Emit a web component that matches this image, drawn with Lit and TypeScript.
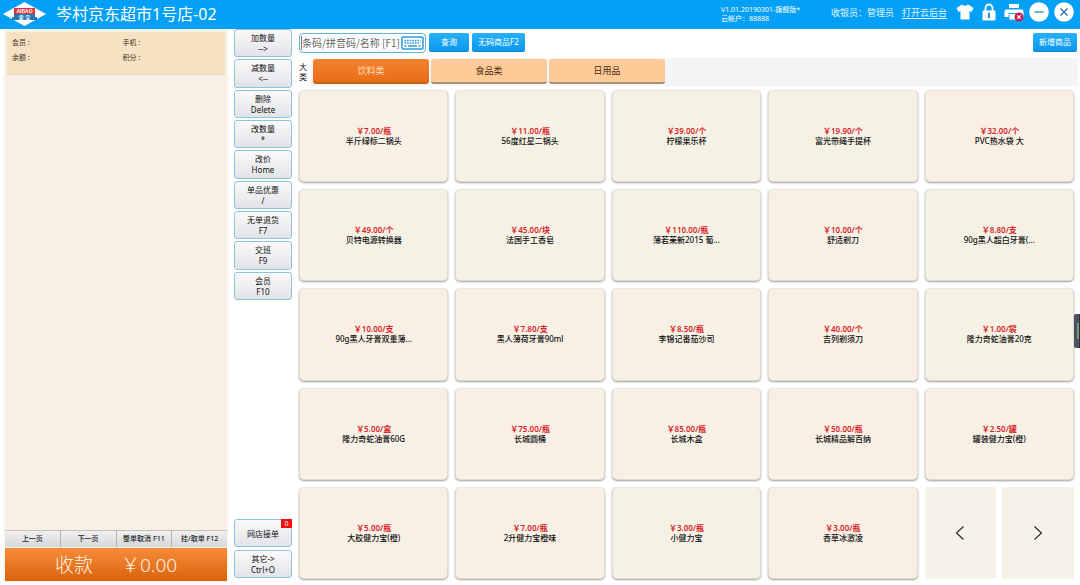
import { LitElement, html, css, svg } from "lit";
import { customElement, property, state } from "lit/decorators.js";
import { classMap } from "lit/directives/class-map.js";

interface Product {
  price: string;
  name: string;
  tone: "warm" | "cool" | "mixed";
}

const p = (price: string, name: string, tone: Product["tone"]): Product => ({ price, name, tone });

const PRODUCTS: Product[] = [
  p("￥7.00/瓶", "半斤绿标二锅头", "mixed"),
  p("￥11.00/瓶", "56度红星二锅头", "cool"),
  p("￥39.00/个", "柠檬果乐杯", "cool"),
  p("￥19.90/个", "富光带绳手提杯", "cool"),
  p("￥32.00/个", "PVC热水袋 大", "warm"),
  p("￥49.00/个", "贝特电源转换器", "cool"),
  p("￥45.00/块", "法国手工香皂", "cool"),
  p("￥110.00/瓶", "薄若莱新2015 葡...", "cool"),
  p("￥10.00/个", "舒适剃刀", "mixed"),
  p("￥8.80/支", "90g黑人超白牙膏(...", "cool"),
  p("￥10.00/支", "90g黑人牙膏双重薄...", "warm"),
  p("￥7.80/支", "黑人薄荷牙膏90ml", "mixed"),
  p("￥8.50/瓶", "李锦记番茄沙司", "mixed"),
  p("￥40.00/个", "吉列剃须刀", "warm"),
  p("￥1.00/袋", "隆力奇蛇油膏20克", "cool"),
  p("￥5.00/盒", "隆力奇蛇油膏60G", "mixed"),
  p("￥75.00/瓶", "长城圆桶", "warm"),
  p("￥85.00/瓶", "长城木盒", "mixed"),
  p("￥50.00/瓶", "长城精品解百纳", "warm"),
  p("￥2.50/罐", "罐装健力宝(橙)", "mixed"),
  p("￥5.00/瓶", "大胶健力宝(橙)", "mixed"),
  p("￥7.00/瓶", "2升健力宝橙味", "mixed"),
  p("￥3.00/瓶", "小健力宝", "cool"),
  p("￥3.00/瓶", "香草冰激凌", "warm"),
];

const ACTIONS: [string, string][] = [
  ["加数量", "-->"],
  ["减数量", "<--"],
  ["删除", "Delete"],
  ["改数量", "*"],
  ["改价", "Home"],
  ["单品优惠", "/"],
  ["无单退货", "F7"],
  ["交班", "F9"],
  ["会员", "F10"],
];

const CATEGORIES = ["饮料类", "食品类", "日用品"];

const base = css`
  * {
    box-sizing: border-box;
  }
  button,
  input {
    margin: 0;
    padding: 0;
    border: 0;
    background: none;
    font: inherit;
    color: inherit;
  }
  button {
    cursor: pointer;
  }
  svg {
    display: block;
  }
`;

@customElement("pos-header")
export class PosHeader extends LitElement {
  static styles = [
    base,
    css`
      :host {
        display: flex;
        align-items: center;
        height: 29px;
        padding: 0 6px 5px 3px;
        background: #04a0f5;
        color: #fff;
      }
      .logo {
        flex: none;
        margin-top: 4px;
      }
      .logo-text {
        font: bold 5px "Liberation Sans", "Noto Sans CJK SC", sans-serif;
      }
      h1 {
        flex: 1;
        margin: 4px 0 0 10px;
        font-size: 16px;
        line-height: 20px;
        font-weight: 400;
        white-space: nowrap;
      }
      .version {
        width: 110px;
        margin-top: 4px;
        font-size: 7px;
        line-height: 9px;
        white-space: nowrap;
      }
      .cashier,
      .cloud {
        margin-top: 2px;
        font-size: 9px;
        line-height: 14px;
        color: #e2f4ff;
        white-space: nowrap;
      }
      .cloud {
        margin-left: 8px;
        margin-right: 9px;
        text-underline-offset: 2px;
      }
      .tools {
        display: flex;
        align-items: center;
        gap: 5px;
      }
    `,
  ];

  render() {
    return html`
      <svg class="logo" width="43" height="24" viewBox="0 0 43 24" role="img" aria-label="AIBAO 爱宝">
        <path d="M21.500 0L43 12 21.500 24 0 12z" fill="#fff" />
        <path d="M11 6h21v6H11z" fill="#e0303c" />
        <path d="M11 12h21v6H11z" fill="#2878b4" />
        <path d="M9 15h4v3H9zM30 15h4v3h-4z" fill="#2878b4" />
        <text class="logo-text" x="21.500" y="11" text-anchor="middle" fill="#fff">AIBAO</text>
        <text class="logo-text" x="21.500" y="17" text-anchor="middle" fill="#dceefa">爱 宝</text>
      </svg>
      <h1>岑村京东超市1号店-02</h1>
      <div class="version">V1.01.20190301-旗舰版*<br />云帐户：88888</div>
      <span class="cashier">收银员：管理员</span>
      <a class="cloud" href="#cloud">打开云后台</a>
      <div class="tools">
        <button aria-label="换肤">
          <svg width="18" height="20" viewBox="0 0 18 20">
            <path d="M6 2.500Q9 5 12 2.500L17.500 6 15.500 10 13.500 9V17.500H4.500V9L2.500 10 .5 6z" fill="#fff" />
          </svg>
        </button>
        <button aria-label="锁屏">
          <svg width="20" height="20" viewBox="0 0 20 20">
            <path d="M6.500 9V6a3.500 3.500 0 0 1 7 0v3" fill="none" stroke="#fff" stroke-width="1.800" />
            <rect x="3.500" y="8.500" width="13" height="10" rx="1" fill="#fff" />
            <path d="M10 11.500v4" stroke="#1686cc" stroke-width="1.800" stroke-linecap="round" />
          </svg>
        </button>
        <button aria-label="打印机">
          <svg width="20" height="20" viewBox="0 0 20 20">
            <path d="M5 2h10v4H5z" fill="#fff" />
            <path d="M2.500 7.500h15a2 2 0 0 1 2 2V15H.5V9.500a2 2 0 0 1 2-2z" fill="#fff" />
            <path d="M5 11.500h10v6.500H5z" fill="#fff" stroke="#27a6ef" />
            <circle cx="15" cy="15" r="4.500" fill="#c41f56" />
            <path d="M13.300 13.300l3.400 3.400m0-3.400l-3.400 3.400" stroke="#fff" stroke-width="1.200" />
          </svg>
        </button>
        <button aria-label="最小化">
          <svg width="20" height="20" viewBox="0 0 20 20">
            <circle cx="10" cy="10" r="9.800" fill="#fff" />
            <path d="M5.500 10h9" stroke="#1c86c8" stroke-width="1.300" />
          </svg>
        </button>
        <button aria-label="关闭">
          <svg width="20" height="20" viewBox="0 0 20 20">
            <circle cx="10" cy="10" r="9.800" fill="#fff" />
            <path d="M6.500 6.500l7 7m0-7l-7 7" stroke="#1c6ea8" stroke-width="1.200" />
          </svg>
        </button>
      </div>
    `;
  }
}

@customElement("pos-order")
export class PosOrder extends LitElement {
  static styles = [
    base,
    css`
      :host {
        display: flex;
        flex-direction: column;
        background: #f8efe5;
      }
      .member {
        display: grid;
        grid-template-columns: 1fr 1fr;
        column-gap: 8px;
        row-gap: 4px;
        height: 43px;
        margin: 3px 2px 0;
        padding: 5px 0 0 5px;
        background: #f6e1c3;
        border-bottom: 2px solid #f0dac4;
        font-size: 7px;
        line-height: 11px;
        align-content: start;
        color: #3c2f20;
      }
      .lines {
        flex: 1;
      }
      .pager {
        display: grid;
        grid-template-columns: repeat(4, 1fr);
        height: 17px;
        gap: 1px;
        background: #b4b4b4;
      }
      .pager button {
        background: linear-gradient(#f0f0f0, #d6d8da);
        border-top: 1px solid #c0c0c0;
        font-size: 7px;
        line-height: 14px;
        font-weight: 500;
        color: #222;
        white-space: nowrap;
      }
      .pay {
        display: flex;
        align-items: center;
        justify-content: center;
        gap: 28px;
        height: 33px;
        margin-top: 1px;
        background: linear-gradient(#f78b38, #d9640f);
        color: #fff3e4;
        font-size: 19px;
        line-height: 24px;
        font-weight: 300;
      }
    `,
  ];

  render() {
    return html`
      <div class="member"><span>会员 :</span><span>手机 :</span><span>余额 :</span><span>积分 :</span></div>
      <div class="lines"></div>
      <div class="pager">
        ${["上一页", "下一页", "整单取消 F11", "挂/取单 F12"].map((t) => html`<button>${t}</button>`)}
      </div>
      <button class="pay"><span>收款</span><span>￥0.00</span></button>
    `;
  }
}

@customElement("pos-actions")
export class PosActions extends LitElement {
  static styles = [
    base,
    css`
      :host {
        display: flex;
        flex-direction: column;
        justify-content: space-between;
      }
      .list {
        display: grid;
        gap: 2px;
      }
      .top {
        grid-template-rows: repeat(9, 1fr);
        height: 271px;
      }
      .bottom {
        gap: 3px;
        grid-auto-rows: 28px;
      }
      button {
        position: relative;
        border: 1px solid #8fc3dc;
        border-radius: 3px;
        background: linear-gradient(#fafafb, #e2e3e7);
        font-size: 8px;
        line-height: 11px;
        color: #111;
      }
      button span {
        display: block;
      }
      .badge {
        position: absolute;
        top: -1px;
        right: -1px;
        width: 11px;
        height: 9px;
        background: #ee1111;
        color: #fff;
        font-size: 7px;
        line-height: 9px;
      }
    `,
  ];

  render() {
    return html`
      <div class="list top">
        ${ACTIONS.map(([label, key]) => html`<button><span>${label}</span><span>${key}</span></button>`)}
      </div>
      <div class="list bottom">
        <button><span>网店接单</span><span class="badge">0</span></button>
        <button><span>其它-&gt;</span><span>Ctrl+O</span></button>
      </div>
    `;
  }
}

@customElement("product-card")
export class ProductCard extends LitElement {
  @property({ attribute: false }) product!: Product;

  static styles = [
    base,
    css`
      :host {
        display: grid;
        min-width: 0;
      }
      button {
        border: 1px solid #dedad4;
        border-top-color: #ece8e0;
        border-radius: 5px;
        box-shadow: 0 1px 2px #a09c9a;
        font-size: 8px;
        line-height: 10px;
        font-weight: 500;
        color: #111;
        overflow: hidden;
      }
      .warm {
        background: #f9efe4;
      }
      .cool {
        background: #f5f1e5;
      }
      .mixed {
        background: #f7f0e5;
      }
      span {
        display: block;
        white-space: nowrap;
      }
      .price {
        color: #d81e28;
        font-weight: 600;
      }
    `,
  ];

  render() {
    const { price, name, tone } = this.product;
    return html`<button class=${tone}><span class="price">${price}</span><span>${name}</span></button>`;
  }
}

@customElement("pos-catalog")
export class PosCatalog extends LitElement {
  @state() private active = 0;

  static styles = [
    base,
    css`
      :host {
        display: flex;
        flex-direction: column;
        min-width: 0;
      }
      .toolbar {
        display: flex;
        align-items: center;
        gap: 3px;
        height: 27px;
        padding-right: 1px;
      }
      .search {
        display: flex;
        align-items: center;
        width: 127px;
        height: 20px;
        padding: 0 1px;
        border: 1px solid #62b4da;
        border-radius: 4px;
        background: #fff;
      }
      .search input {
        flex: 1;
        min-width: 0;
        height: 14px;
        border-left: 1px solid #777;
        font-family: "Noto Sans CJK SC", sans-serif;
        font-size: 10px;
        line-height: 14px;
        outline: none;
      }
      .search input::placeholder {
        color: #666;
        opacity: 1;
      }
      .blue {
        height: 19px;
        padding: 0 6px;
        border-radius: 2px;
        border-bottom: 1px solid #1683cc;
        background: linear-gradient(#27b0fb, #0c99ef);
        color: #fff;
        font-size: 8px;
        line-height: 12px;
        white-space: nowrap;
      }
      .query {
        padding: 0 12px;
      }
      .spacer {
        flex: 1;
      }
      .categories {
        display: flex;
        gap: 2px;
        height: 28px;
        margin: 2px 0 4px;
        padding: 1px 0 2px;
        background: #f4f5f7;
      }
      .heading {
        width: 12px;
        font-size: 8px;
        line-height: 10px;
        padding-top: 4px;
        background: #fff;
        margin: -1px 0 -2px;
      }
      .heading span {
        display: block;
      }
      .tab {
        flex: 0 1 116px;
        border-radius: 3px;
        border-bottom: 2px solid #a98d78;
        background: #fdcb97;
        color: #4a2a10;
        font-size: 9px;
        line-height: 14px;
      }
      .selected {
        background: linear-gradient(#f58332, #e86d15);
        border-bottom-color: #c55f17;
        color: #ffdfc0;
      }
      .grid {
        flex: 1;
        display: grid;
        grid-template-columns: repeat(5, minmax(0, 1fr));
        grid-auto-rows: 1fr;
        gap: 7px;
        padding: 0 4px 6px 0;
      }
      .paging {
        display: grid;
        grid-template-columns: 1fr 1fr;
        gap: 6px;
      }
      .paging button {
        display: grid;
        place-items: center;
        background: #f6f2e7;
      }
    `,
  ];

  private chevron(points: string) {
    return html`<svg width="10" height="16" viewBox="0 0 10 16" fill="none" stroke="#222" stroke-width="1.100">
      ${svg`<polyline points=${points} />`}
    </svg>`;
  }

  render() {
    return html`
      <div class="toolbar">
        <div class="search">
          <input type="text" aria-label="商品搜索" placeholder="条码/拼音码/名称 [F1]" />
          <button aria-label="屏幕键盘">
            <svg width="23" height="14" viewBox="0 0 23 14" fill="none" stroke="#2f9bdc">
              <rect x="1" y="1" width="21" height="12" rx="1" stroke-width="1.500" />
              <path d="M3.500 4.500h16M3.500 7h16" stroke-width="1.400" stroke-dasharray="1.600 1" />
              <path d="M3.500 10h2M7 10h9M17.500 10h2" stroke-width="1.400" />
            </svg>
          </button>
        </div>
        <button class="blue query">查询</button>
        <button class="blue">无码商品F2</button>
        <div class="spacer"></div>
        <button class="blue">新增商品</button>
      </div>
      <div class="categories">
        <div class="heading"><span>大</span><span>类</span></div>
        ${CATEGORIES.map(
          (name, i) => html`<button
            class=${classMap({ tab: true, selected: i === this.active })}
            aria-pressed=${i === this.active}
            @click=${() => (this.active = i)}
          >
            ${name}
          </button>`
        )}
      </div>
      <div class="grid">
        ${PRODUCTS.map((item) => html`<product-card .product=${item}></product-card>`)}
        <div class="paging">
          <button aria-label="上一页">${this.chevron("8.500,1.500 1.500,8 8.500,14.500")}</button>
          <button aria-label="下一页">${this.chevron("1.500,1.500 8.500,8 1.500,14.500")}</button>
        </div>
      </div>
    `;
  }
}

@customElement("app-root")
export class AppRoot extends LitElement {
  static styles = [
    base,
    css`
      :host {
        display: flex;
        flex-direction: column;
        height: 100vh;
        overflow: hidden;
        background: #fff;
        font-family: "Noto Sans", "Noto Sans CJK SC", sans-serif;
        color: #111;
      }
      .body {
        flex: 1;
        min-height: 0;
        display: grid;
        grid-template-columns: 222px 58px minmax(0, 1fr);
        column-gap: 7px;
        padding: 0 2px 0 5px;
      }
      pos-order {
        margin-bottom: 4px;
        box-shadow: 0 0 0 2px #fdf8f2;
      }
      pos-actions {
        margin-bottom: 7px;
      }
      .drawer {
        position: absolute;
        right: 0;
        top: 314px;
        width: 6px;
        height: 34px;
        border-radius: 2px 0 0 2px;
        background: #4b5160;
        border-right: 1px solid #333;
      }
      .drawer::after {
        content: "";
        display: block;
        width: 2px;
        height: 16px;
        margin-left: 3px;
        background: #6f9880;
      }
      pos-header {
        position: relative;
      }
    `,
  ];

  render() {
    return html`
      <pos-header></pos-header>
      <div class="body">
        <pos-order></pos-order>
        <pos-actions></pos-actions>
        <pos-catalog></pos-catalog>
      </div>
      <button class="drawer" aria-label="展开侧栏"></button>
    `;
  }
}
